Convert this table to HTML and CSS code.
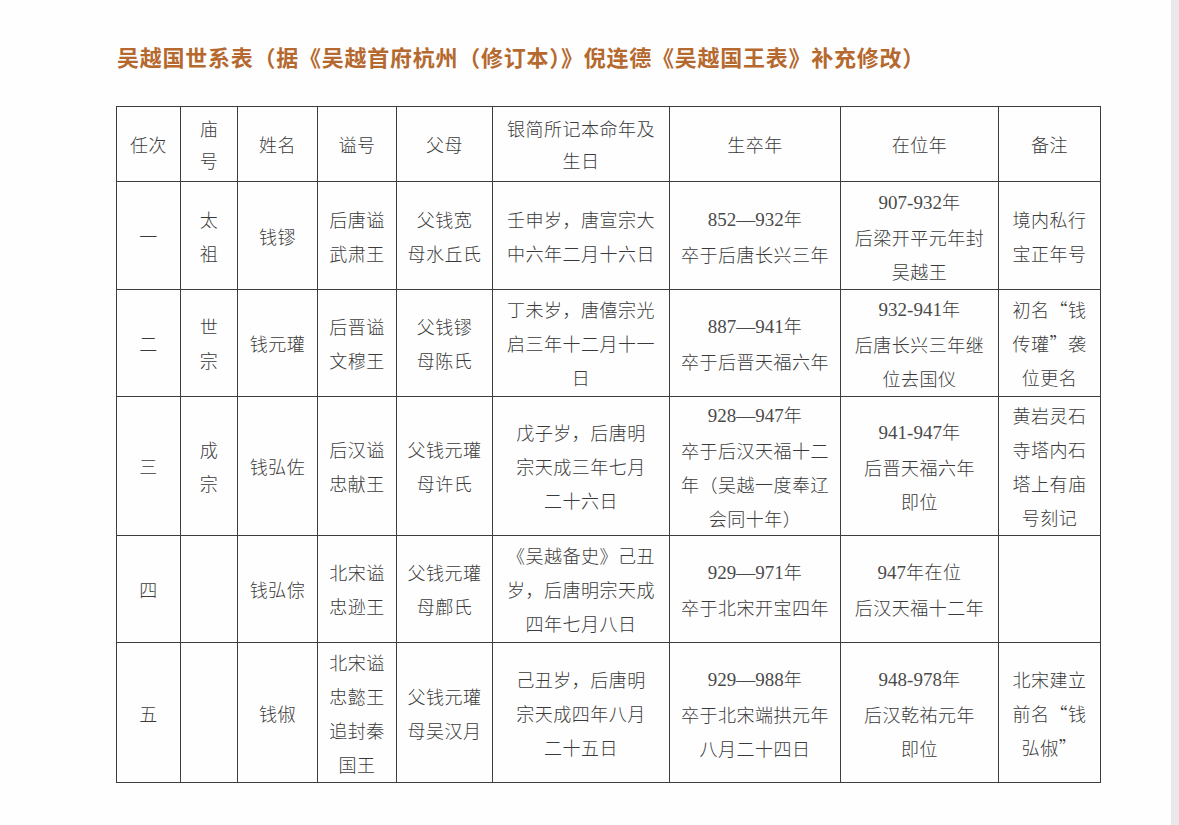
FILE: index.html
```html
<!DOCTYPE html>
<html lang="zh-CN">
<head>
<meta charset="utf-8">
<title>吴越国世系表</title>
<link rel="stylesheet" href="styles.css">
</head>
<body>
<div class="page">
  <main class="sheet">
    <h1 class="title">吴越国世系表（据《吴越首府杭州（修订本）》倪连德《吴越国王表》补充修改）</h1>
    <table class="lineage">
      <colgroup>
        <col class="c1"><col class="c2"><col class="c3"><col class="c4"><col class="c5"><col class="c6"><col class="c7"><col class="c8"><col class="c9">
      </colgroup>
      <thead>
        <tr class="r-head">
          <th>任次</th>
          <th>庙<br>号</th>
          <th>姓名</th>
          <th>谥号</th>
          <th>父母</th>
          <th>银简所记本命年及<br>生日</th>
          <th>生卒年</th>
          <th>在位年</th>
          <th>备注</th>
        </tr>
      </thead>
      <tbody>
        <tr class="r1">
          <td>一</td>
          <td>太<br>祖</td>
          <td>钱镠</td>
          <td>后唐谥<br>武肃王</td>
          <td>父钱宽<br>母水丘氏</td>
          <td>壬申岁，唐宣宗大<br>中六年二月十六日</td>
          <td><span class="num">852—932</span>年<br>卒于后唐长兴三年</td>
          <td><span class="num">907-932</span>年<br>后梁开平元年封<br>吴越王</td>
          <td>境内私行<br>宝正年号</td>
        </tr>
        <tr class="r2">
          <td>二</td>
          <td>世<br>宗</td>
          <td>钱元瓘</td>
          <td>后晋谥<br>文穆王</td>
          <td>父钱镠<br>母陈氏</td>
          <td>丁未岁，唐僖宗光<br>启三年十二月十一<br>日</td>
          <td><span class="num">887—941</span>年<br>卒于后晋天福六年</td>
          <td><span class="num">932-941</span>年<br>后唐长兴三年继<br>位去国仪</td>
          <td>初名“钱<br>传瓘”袭<br>位更名</td>
        </tr>
        <tr class="r3">
          <td>三</td>
          <td>成<br>宗</td>
          <td>钱弘佐</td>
          <td>后汉谥<br>忠献王</td>
          <td>父钱元瓘<br>母许氏</td>
          <td>戊子岁，后唐明<br>宗天成三年七月<br>二十六日</td>
          <td><span class="num">928—947</span>年<br>卒于后汉天福十二<br>年（吴越一度奉辽<br>会同十年）</td>
          <td><span class="num">941-947</span>年<br>后晋天福六年<br>即位</td>
          <td>黄岩灵石<br>寺塔内石<br>塔上有庙<br>号刻记</td>
        </tr>
        <tr class="r4">
          <td>四</td>
          <td></td>
          <td>钱弘倧</td>
          <td>北宋谥<br>忠逊王</td>
          <td>父钱元瓘<br>母鄜氏</td>
          <td>《吴越备史》己丑<br>岁，后唐明宗天成<br>四年七月八日</td>
          <td><span class="num">929—971</span>年<br>卒于北宋开宝四年</td>
          <td><span class="num">947</span>年在位<br>后汉天福十二年</td>
          <td></td>
        </tr>
        <tr class="r5">
          <td>五</td>
          <td></td>
          <td>钱俶</td>
          <td>北宋谥<br>忠懿王<br>追封秦<br>国王</td>
          <td>父钱元瓘<br>母吴汉月</td>
          <td>己丑岁，后唐明<br>宗天成四年八月<br>二十五日</td>
          <td><span class="num">929—988</span>年<br>卒于北宋端拱元年<br>八月二十四日</td>
          <td><span class="num">948-978</span>年<br>后汉乾祐元年<br>即位</td>
          <td>北宋建立<br>前名“钱<br>弘俶”</td>
        </tr>
      </tbody>
    </table>
  </main>
  <aside class="edge"></aside>
</div>
</body>
</html>
```

FILE: styles.css
```css
html, body {
  margin: 0;
  padding: 0;
  background: #ffffff;
}

.page {
  display: flex;
  width: 1179px;
  height: 825px;
  overflow: hidden;
}

.sheet {
  flex: 1;
  padding: 43px 0 0 116px;
  background: #fefefe;
}

.edge {
  width: 8px;
  background: #e9e9eb;
}

.title {
  margin: 0 0 37px 1px;
  font-family: "Noto Sans CJK SC", sans-serif;
  font-weight: 700;
  font-size: 22px;
  line-height: 26px;
  color: #b5692f;
  letter-spacing: 0.75px;
  white-space: nowrap;
}

.lineage {
  width: 984px;
  table-layout: fixed;
  border-collapse: collapse;
  font-family: "Noto Sans CJK SC", sans-serif;
  font-weight: 300;
  font-size: 18px;
  color: #3a3a3a;
}

.c1 { width: 64px; }
.c2 { width: 57px; }
.c3 { width: 80px; }
.c4 { width: 79px; }
.c5 { width: 96px; }
.c6 { width: 177px; }
.c7 { width: 171px; }
.c8 { width: 158px; }
.c9 { width: 102px; }

.lineage th,
.lineage td {
  border: 1px solid #3d3d3d;
  padding: 0;
  text-align: center;
  vertical-align: middle;
  white-space: nowrap;
  font-weight: 300;
  line-height: 34px;
  letter-spacing: 0.5px;
}

.lineage th {
  line-height: 32px;
}

.r-head { height: 75px; }
.r1 { height: 108px; }
.r2 { height: 107px; }
.r3 { height: 139px; }
.r4 { height: 107px; }
.r5 { height: 140px; }

.num {
  font-family: "Liberation Serif", serif;
  font-size: 19px;
  letter-spacing: 0;
  color: #4a4a4a;
}
```
